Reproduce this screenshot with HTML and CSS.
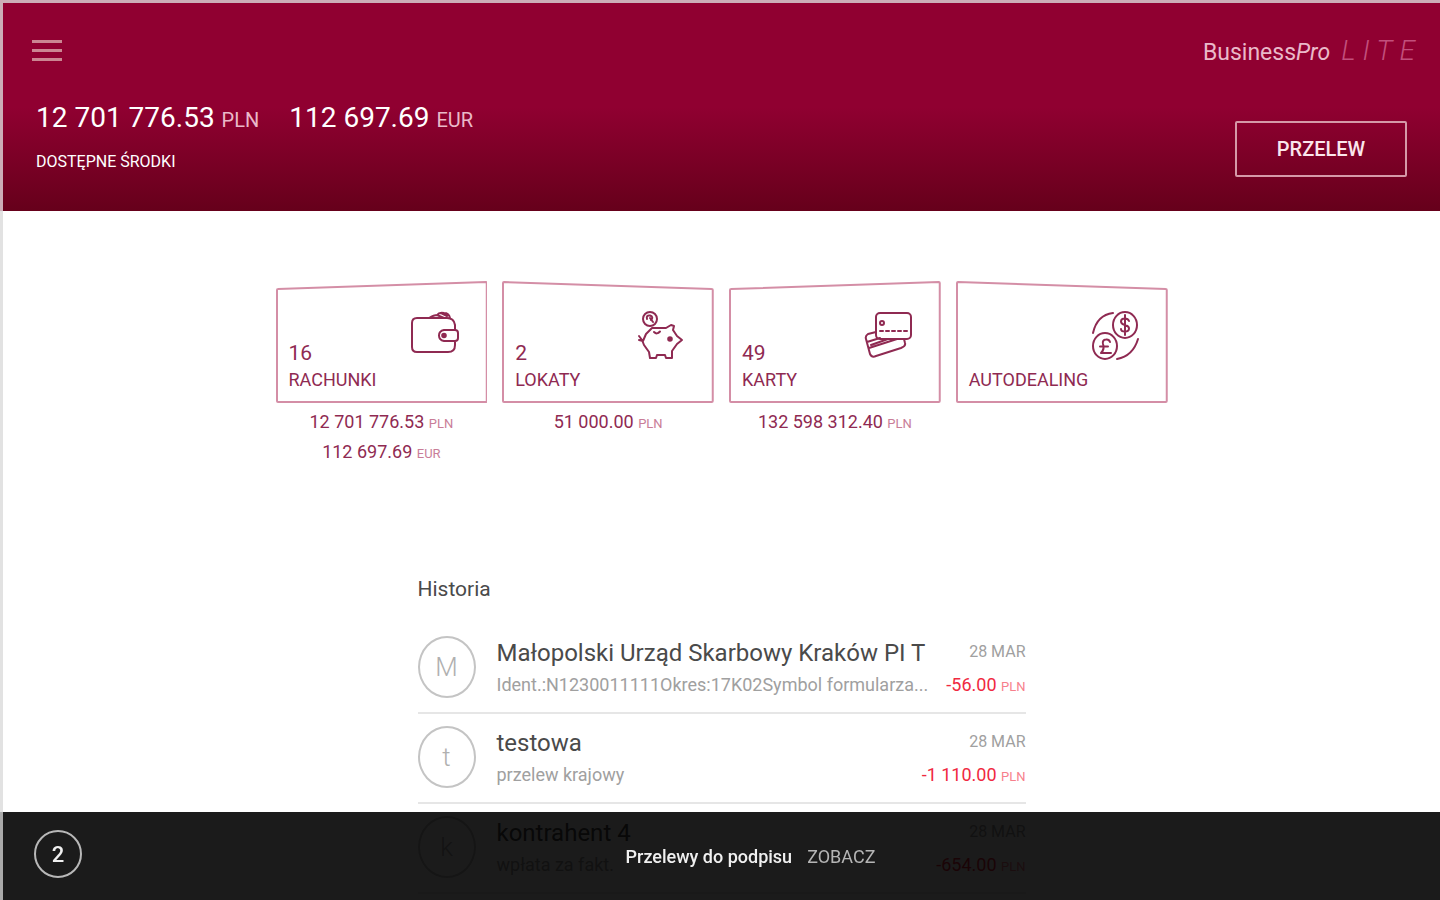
FILE: index.html
```html
<!DOCTYPE html>
<html lang="pl">
<head>
<meta charset="utf-8">
<title>BusinessPro LITE</title>
<link rel="stylesheet" href="styles.css">
</head>
<body>
<header class="header">
  <div class="topbar">
    <button class="menu" type="button" aria-label="Menu"><span class="menu-line"></span><span class="menu-line"></span><span class="menu-line"></span></button>
    <div class="brand"><span class="brand-name">Business<em>Pro</em></span><span class="brand-lite">LITE</span></div>
  </div>
  <div class="summary">
    <div>
      <div class="balances">
        <span class="balance">12 701 776.53 <small>PLN</small></span>
        <span class="balance">112 697.69 <small>EUR</small></span>
      </div>
      <div class="balances-label">DOSTĘPNE ŚRODKI</div>
    </div>
    <button class="transfer" type="button">PRZELEW</button>
  </div>
</header>
<main class="main">
  <nav class="tiles">
    <div class="tile">
      <a class="card" href="#">
        <svg class="frame" viewBox="0 0 212 122" preserveAspectRatio="none"><path d="M1 9 Q1 8 2 8 L210 1 Q211 1 211 2 V120 Q211 121 210 121 H2 Q1 121 1 120Z"/></svg>
        <span class="card-text"><span class="card-count">16</span><span class="card-name">RACHUNKI</span></span>
        <svg class="icon" viewBox="0 0 50 52"><path d="M45 21V16Q44 9 37 9H7Q2 9 2 14V38Q2 43 7 43H38Q45 43 45 36V32M45 21H34Q29 22 29 26.500Q29 31 34 32H45Q48 32 48 29V24Q48 21 45 21M19 9Q24 6 27 6Q29 3 34 4Q39 4 40 9M27 6L34 9M31 4L37 7"/><circle cx="34" cy="26.500" r="1.800" fill="currentColor"/></svg>
      </a>
      <div class="tile-amount">12 701 776.53 <small>PLN</small></div>
      <div class="tile-amount">112 697.69 <small>EUR</small></div>
    </div>
    <div class="tile">
      <a class="card" href="#">
        <svg class="frame" viewBox="0 0 212 122" preserveAspectRatio="none"><path d="M1 2 Q1 1 2 1 L210 8 Q211 8 211 9 V120 Q211 121 210 121 H2 Q1 121 1 120Z"/></svg>
        <span class="card-text"><span class="card-count">2</span><span class="card-name">LOKATY</span></span>
        <svg class="icon" viewBox="0 0 50 52"><circle cx="13" cy="10" r="7"/><path d="M10 10Q9 6 13 6.500Q17 8 14 11M13 9L16 13"/><path d="M15 19H29L34 16L37 17L36 21L40 27L45 31L40 35L35 42V49H29L28 46H20L19 49H13L12 43L7 36L5 31L2 27M2 31L6 32L9 25L15 19M17 23Q20 26 23 22.500"/><circle cx="33" cy="30" r="1.800" fill="currentColor"/></svg>
      </a>
      <div class="tile-amount">51 000.00 <small>PLN</small></div>
    </div>
    <div class="tile">
      <a class="card" href="#">
        <svg class="frame" viewBox="0 0 212 122" preserveAspectRatio="none"><path d="M1 9 Q1 8 2 8 L210 1 Q211 1 211 2 V120 Q211 121 210 121 H2 Q1 121 1 120Z"/></svg>
        <span class="card-text"><span class="card-count">49</span><span class="card-name">KARTY</span></span>
        <svg class="icon" viewBox="0 0 50 52"><rect x="12" y="4" width="35" height="26" rx="4"/><circle cx="18" cy="14" r="2"/><path d="M16 22H45" stroke-dasharray="3 3"/><path d="M12 23L4 25Q1 27 2 30L6 45Q8 49 12 47L37 39Q42 37 41 34L40 30M3 33L16 29M5 39L33 30M7 36L24 30"/></svg>
      </a>
      <div class="tile-amount">132 598 312.40 <small>PLN</small></div>
    </div>
    <div class="tile">
      <a class="card" href="#">
        <svg class="frame" viewBox="0 0 212 122" preserveAspectRatio="none"><path d="M1 2 Q1 1 2 1 L210 8 Q211 8 211 9 V120 Q211 121 210 121 H2 Q1 121 1 120Z"/></svg>
        <span class="card-text"><span class="card-name">AUTODEALING</span></span>
        <svg class="icon" viewBox="0 0 50 52"><ellipse cx="34" cy="16" rx="12" ry="13"/><ellipse cx="14" cy="37" rx="12" ry="13"/><path d="M2 24Q6 6 22 4M47 30Q42 47 26 50M38 12Q37 9.500 34 9.500Q30 9.500 30 12.500Q30 15 34 16Q38 17 38 19.500Q38 22.500 34 22.500Q30 22.500 30 20M34 6V26M19 33Q18 30 15 30.500Q11 31 12 35Q14 40 10 44H20M9 37.500H17"/></svg>
      </a>
    </div>
  </nav>
  <section class="history">
    <h2 class="history-title">Historia</h2>
    <ul class="history-list">
      <li class="entry">
        <span class="avatar">M</span>
        <div class="entry-body">
          <div class="entry-row"><span class="entry-name">Małopolski Urząd Skarbowy Kraków PI T</span><span class="entry-date">28 MAR</span></div>
          <div class="entry-row"><span class="entry-note">Ident.:N1230011111Okres:17K02Symbol formularza...</span><span class="entry-amount">-56.00 <small>PLN</small></span></div>
        </div>
      </li>
      <li class="entry">
        <span class="avatar">t</span>
        <div class="entry-body">
          <div class="entry-row"><span class="entry-name">testowa</span><span class="entry-date">28 MAR</span></div>
          <div class="entry-row"><span class="entry-note">przelew krajowy</span><span class="entry-amount">-1 110.00 <small>PLN</small></span></div>
        </div>
      </li>
      <li class="entry">
        <span class="avatar">k</span>
        <div class="entry-body">
          <div class="entry-row"><span class="entry-name">kontrahent 4</span><span class="entry-date">28 MAR</span></div>
          <div class="entry-row"><span class="entry-note">wpłata za fakt.</span><span class="entry-amount">-654.00 <small>PLN</small></span></div>
        </div>
      </li>
    </ul>
  </section>
</main>
<footer class="signbar">
  <span class="badge">2</span>
  <span class="sign-text">Przelewy do podpisu</span>
  <a class="sign-link" href="#">ZOBACZ</a>
</footer>
</body>
</html>
```
FILE: styles.css
```css
* { box-sizing: border-box; }
body {
  margin: 0;
  min-height: 100vh;
  font-family: Roboto, "Liberation Sans", sans-serif;
  background: #fff;
  color: #4a4a4a;
}
small { font-size: 13px; }
.header {
  border-top: 3px solid #ccadb7;
  border-left: 3px solid #ccadb7;
  height: 211px;
  padding: 31px 32px 0 29px;
  background: linear-gradient(#900031 0, #900031 50%, #66001b 100%) padding-box;
  color: #fff;
}
.topbar { display: flex; justify-content: space-between; align-items: center; height: 32px; margin-right: -14px; }
.menu {
  display: flex;
  flex-direction: column;
  gap: 6px;
  width: 30px;
  padding: 0;
  border: 0;
  background: none;
}
.menu-line { height: 3px; width: 30px; background: #cb8592; }
.brand { display: flex; align-items: baseline; gap: 11px; }
.brand-name { font-size: 23px; color: #eab9c9; }
.brand-lite { font-size: 28px; font-weight: 300; font-style: italic; letter-spacing: 7px; color: #c24f7c; }
.summary { display: flex; justify-content: space-between; padding: 36px 1px 0 4px; }
.balances { display: flex; gap: 30px; height: 32px; line-height: 32px; }
.balance { font-size: 28px; }
.balance small { font-size: 20px; color: #eab9c9; }
.balances-label { margin-top: 16px; font-size: 16px; line-height: 24px; }
.transfer {
  width: 172px;
  height: 56px;
  margin-top: 19px;
  border: 2px solid #d599a8;
  border-radius: 2px;
  background: none;
  color: #fbe6ec;
  font: 500 20px Roboto, sans-serif;
}
.main {
  border-left: 3px solid #e2e2e2;
  min-height: calc(100vh - 211px);
  padding-top: 70px;
}
.tiles {
  display: grid;
  grid-template-columns: repeat(4, minmax(0, 1fr));
  gap: 15px;
  width: 892px;
  max-width: 100%;
  min-height: 292px;
  margin: 0 auto;
}
.tile { color: #8f2a52; text-align: center; }
.card {
  position: relative;
  display: flex;
  justify-content: space-between;
  height: 122px;
  margin-bottom: 5px;
  padding: 28px 27px 9px 13px;
  color: #8f2a52;
  text-decoration: none;
  text-align: left;
}
.frame {
  position: absolute;
  inset: 0;
  width: 100%;
  height: 100%;
  fill: none;
  stroke: #d48ea6;
  stroke-width: 2;
}
.card-text { display: flex; flex-direction: column; justify-content: flex-end; }
.card-count { font-size: 21px; line-height: 26px; }
.card-name { font-size: 18px; line-height: 28px; }
.icon {
  width: 50px;
  height: 52px;
  fill: none;
  stroke: currentColor;
  stroke-width: 2;
  stroke-linecap: round;
  stroke-linejoin: round;
}
.tile-amount { font-size: 18px; line-height: 28px; }
.tile-amount small { color: #c97d98; }
.history { width: 608px; max-width: 100%; margin: 0 auto; }
.history-title { margin: 0; font-size: 21px; font-weight: 400; line-height: 32px; }
.history-list { margin: 19px 0 0; padding: 0; list-style: none; }
.entry {
  display: flex;
  gap: 21px;
  height: 90px;
  padding-top: 12px;
  border-bottom: 2px solid #e6e6e6;
}
.avatar {
  display: flex;
  align-items: center;
  justify-content: center;
  flex: none;
  width: 58px;
  height: 62px;
  border: 2px solid #c4c4c4;
  border-radius: 50%;
  font-size: 26px;
  font-weight: 300;
  color: #b0b0b0;
}
.entry-body { flex: 1; min-width: 0; }
.entry-row { display: flex; justify-content: space-between; line-height: 30px; white-space: nowrap; }
.entry-name { font-size: 24px; line-height: 34px; }
.entry-date { font-size: 16px; line-height: 32px; color: #a0a0a0; }
.entry-note { font-size: 18px; color: #a0a0a0; }
.entry-amount { font-size: 18px; color: #f0293f; }
.entry-amount small { color: #f77f8c; }
.signbar {
  position: fixed;
  left: 0;
  right: 0;
  bottom: 0;
  display: flex;
  align-items: center;
  justify-content: center;
  gap: 15px;
  height: 88px;
  padding-left: 58px;
  border-left: 3px solid #aaa;
  background: rgba(0, 0, 0, .894) padding-box;
  color: #f0f0f0;
  font-size: 18px;
}
.badge {
  position: absolute;
  left: 31px;
  top: 18px;
  display: flex;
  align-items: center;
  justify-content: center;
  width: 48px;
  height: 48px;
  border: 2px solid #b8b8b8;
  border-radius: 50%;
  font-size: 22px;
  font-weight: 500;
}
.sign-text { font-weight: 500; }
.sign-link { color: #b5b5b5; text-decoration: none; }
```
